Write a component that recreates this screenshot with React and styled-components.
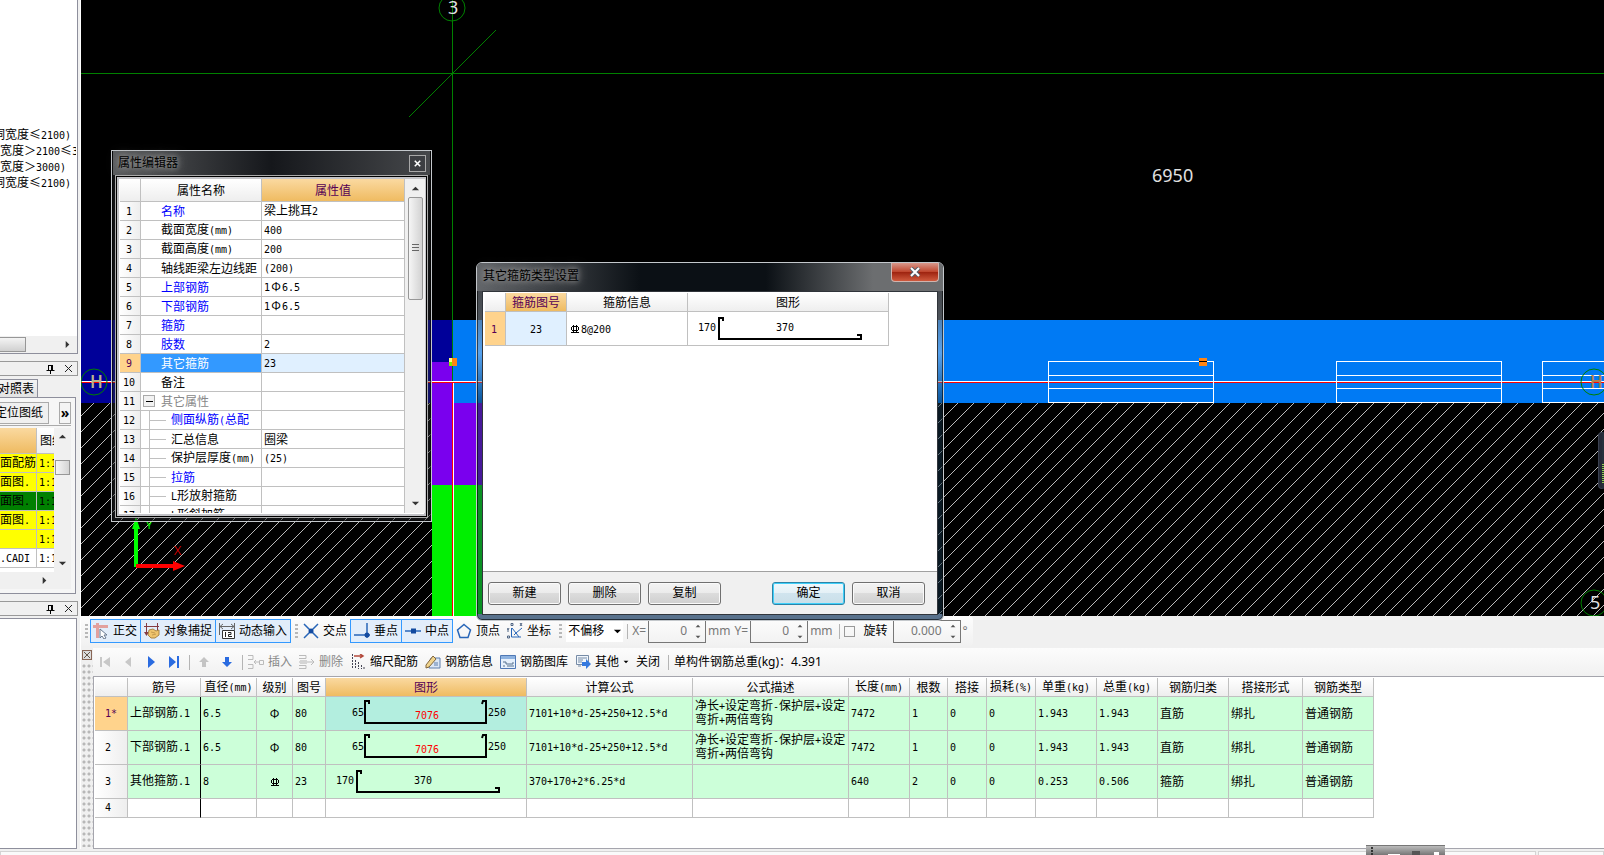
import { Fragment } from "react";
import styled, { createGlobalStyle, css } from "styled-components";

const GlobalStyle = createGlobalStyle`
  * {
    box-sizing: border-box;
  }

  body {
    margin: 0;
    background: #f0f0f0;
    color: #000;
    font-family: "Noto Sans", "Noto Sans CJK SC", sans-serif;
    font-size: 12px;
    line-height: 16px;
    overflow: hidden;
  }

  button,
  input,
  select {
    font: inherit;
    color: inherit;
    margin: 0;
    padding: 0;
  }
`;

const properties = [
  { name: "名称", value: "梁上挑耳2", link: true },
  { name: "截面宽度(mm)", value: "400" },
  { name: "截面高度(mm)", value: "200" },
  { name: "轴线距梁左边线距", value: "(200)" },
  { name: "上部钢筋", value: "1Φ6.5", link: true },
  { name: "下部钢筋", value: "1Φ6.5", link: true },
  { name: "箍筋", value: "", link: true },
  { name: "肢数", value: "2", link: true },
  { name: "其它箍筋", value: "23", selected: true },
  { name: "备注", value: "" },
  { name: "其它属性", value: "", group: true },
  { name: "侧面纵筋(总配", value: "", link: true, child: true },
  { name: "汇总信息", value: "圈梁", child: true },
  { name: "保护层厚度(mm)", value: "(25)", child: true },
  { name: "拉筋", value: "", link: true, child: true },
  { name: "L形放射箍筋", value: "", child: true },
  { name: "L形斜加筋", value: "", child: true },
];

const columns = [
  ["", 33],
  ["筋号", 73],
  ["直径(mm)", 56],
  ["级别", 36],
  ["图号", 33],
  ["图形", 201],
  ["计算公式", 166],
  ["公式描述", 156],
  ["长度(mm)", 61],
  ["根数", 38],
  ["搭接", 39],
  ["损耗(%)", 49],
  ["单重(kg)", 61],
  ["总重(kg)", 61],
  ["钢筋归类", 71],
  ["搭接形式", 74],
  ["钢筋类型", 71],
];

const longNote = "净长+设定弯折-保护层+设定弯折+两倍弯钩";

const bars = [
  ["1*", "上部钢筋.1", "6.5", 1, "80", "u", "7101+10*d-25+250+12.5*d", longNote, "7472", "1", "0", "0", "1.943", "1.943", "直筋", "绑扎", "普通钢筋"],
  ["2", "下部钢筋.1", "6.5", 1, "80", "u", "7101+10*d-25+250+12.5*d", longNote, "7472", "1", "0", "0", "1.943", "1.943", "直筋", "绑扎", "普通钢筋"],
  ["3", "其他箍筋.1", "8", 3, "23", "l", "370+170+2*6.25*d", "", "640", "2", "0", "0", "0.253", "0.506", "箍筋", "绑扎", "普通钢筋"],
];

const drawings = [
  { name: "面配筋", tone: "yellow" },
  { name: "面图.", tone: "yellow" },
  { name: "面图.", tone: "green" },
  { name: "面图.", tone: "yellow" },
  { name: "", tone: "yellow" },
  { name: ".CADI", tone: "white" },
];

// Han characters take 12px each, Latin ones 6px
function Sim({ children }) {
  return String(children)
    .split(/([\x20-\x7e]+)/)
    .map((part, i) =>
      i % 2 ? (
        <Half key={i}>{part}</Half>
      ) : (
        <Fragment key={i}>
          {part.split(/(Φ)/).map((bit, j) => (bit === "Φ" ? <Phi key={j}>Φ</Phi> : bit))}
        </Fragment>
      )
    );
}

function GradeThree() {
  return (
    <Symbol width="12" height="12" viewBox="0 0 12 12" role="img" aria-label="三级钢">
      <path d="M3 3.500h6M2.500 4v3M9.500 4v3M3 7.500h6M4.500 2v8M7.500 2v8M2 9.500h8" />
    </Symbol>
  );
}

function BarShape({ type }) {
  return (
    <Shape width="200" height="33" viewBox="0 0 200 33">
      {type === "u" ? (
        <>
          <path d="M43 7V4h-4v22h121V4h-3l-1 3" />
          <text x="26" y="19">65</text>
          <text x="89" y="22" fill="#f00">7076</text>
          <text x="162" y="19">250</text>
        </>
      ) : (
        <>
          <path d="M35 9V6h-4v21h142v-4h-4" />
          <text x="10" y="19">170</text>
          <text x="88" y="19">370</text>
        </>
      )}
    </Shape>
  );
}

function Triangle({ dir = "down", size = 3, color = "#333" }) {
  const d = {
    down: "M1 3h8l-4 4z",
    up: "M1 7h8l-4-4z",
    right: "M3 1v8l4-4z",
  }[dir];
  return (
    <svg width={size * 3} height={size * 3} viewBox="0 0 10 10" aria-hidden="true">
      <path d={d} fill={color} />
    </svg>
  );
}

function Cross({ size = 9, color = "#222", weight = 1 }) {
  return (
    <svg width={size} height={size} viewBox="0 0 9 9" aria-hidden="true">
      <path d="M1 1l7 7M8 1l-7 7" stroke={color} strokeWidth={weight} fill="none" />
    </svg>
  );
}

function DockTitle() {
  return (
    <DockBar>
      <FlatButton aria-label="固定">
        <svg width="9" height="10" viewBox="0 0 9 10">
          <path d="M2.500 1v5M2 1.500h5M.5 6.500h8M4.500 7v3" stroke="#000" fill="none" />
          <path d="M5 1h2v5H5z" fill="#000" />
        </svg>
      </FlatButton>
      <FlatButton aria-label="关闭">
        <Cross />
      </FlatButton>
    </DockBar>
  );
}

const icons = {
  ortho: (
    <>
      <path d="M0 3.500h15M4.500 0v15" stroke="#e2a09d" strokeWidth="3" />
      <path d="M7 6l7 6h-3l2 3-2 1-2-3-2 2z" fill="#fff" stroke="#68788f" />
    </>
  ),
  snap: (
    <>
      <path d="M0 3.500h15M2.500 0v12M13.500 0v7" stroke="#843b43" />
      <path d="M0 9l2.500 4L5 9z" fill="#843b43" />
      <path d="M5 7l4-1 3 2 3-1v5l-4 3H7l-3-3z" fill="#efc46c" stroke="#a88445" />
      <path d="M7 9l4 1M8 12l4-1" stroke="#c49a50" />
    </>
  ),
  dynamic: (
    <>
      <path d="M.5 0v12M15.500 0v7M1 3.500h14M4 1L1 3.500 4 6M12 1l3 2.500L12 6" stroke="#666" />
      <path d="M3.500 7.500h12v8h-12z" fill="#fff" stroke="#333" />
      <path d="M6.500 9v5M9 9.500h3v2H9.500v2H13" stroke="#222" />
    </>
  ),
  cross: (
    <>
      <path d="M1 1l14 14M15 1L1 15" stroke="#2866b8" strokeWidth="1.500" />
      <circle cx="8" cy="8" r="2.500" fill="#124aa0" />
    </>
  ),
  foot: (
    <>
      <path d="M0 12h16M13 0v15" stroke="#2866b8" strokeWidth="1.500" />
      <circle cx="13" cy="12" r="2.500" fill="#124aa0" />
    </>
  ),
  middle: (
    <>
      <path d="M0 8h16" stroke="#2866b8" strokeWidth="1.500" />
      <path d="M6 5.500h5v5H6z" fill="#124aa0" />
    </>
  ),
  vertex: <path d="M8 1.500l6.500 5.500L12 14.500H4L1.500 7z" stroke="#2866b8" strokeWidth="1.500" />,
  coord: (
    <>
      <path d="M4.500 5v9H14M5 5l4 5 6-5M7 12l2-2 3 4" stroke="#2866b8" />
      <path d="M4 .5h2v2H4zM13 0l2 3M15 0l-2 3M0 5l1 2 1-2M1 7v2M.5 13h2v2h-2z" stroke="#4f6482" />
    </>
  ),
  first: <path d="M3 3h2v10H3zM13 3v10L6 8z" fill="#c8c8c8" />,
  prev: <path d="M11 3v10L5 8z" fill="#c8c8c8" />,
  next: <path d="M5 2v12l7-6z" fill="#2a6be0" />,
  last: <path d="M3 2v12l7-6zM11 2h2v12h-2z" fill="#2a6be0" />,
  up: <path d="M8 3l5 5h-3v5H6V8H3z" fill="#c4c4c4" />,
  down: <path d="M8 13l5-5h-3V3H6v5H3z" fill="#2a6be0" />,
  insert: <path d="M0 1.500h5v4H0M0 10.500h5v4H0M6 8h5M8 6L6 8l2 2M11.500 6.500h4v4h-4z" stroke="#bbb" />,
  remove: (
    <>
      <path d="M0 1.500h7v3H0M0 14.500h7v-3H0M0 8h15M12 5l3 3-3 3" stroke="#bbb" />
      <path d="M1 6h7v4H1z" fill="#d4d4d4" />
    </>
  ),
  scale: (
    <>
      <path d="M2.500 0v15M5.500 6v9M8.500 8v7M11.500 11v4M14 13v2" stroke="#445" strokeDasharray="2 1" />
      <path d="M4 2h9M10 0l3 2-3 2" stroke="#b34a3c" strokeWidth="1.500" />
    </>
  ),
  info: (
    <>
      <path d="M6 4h9v10H4V9z" fill="#dbe7f6" stroke="#5f7fac" />
      <path d="M1 11l7-9 3 3-7 8-3 1z" fill="#f1d58d" stroke="#80653d" />
      <path d="M9 9h4M9 11h4" stroke="#5f7fac" />
    </>
  ),
  library: (
    <>
      <path d="M.5 1.500h15v13H.5z" fill="#e6f0fc" stroke="#4f78b5" />
      <path d="M1 2h14v3H1z" fill="#8db2e0" />
      <path d="M3 8h3v2h7V8M3 12h2M7 12h7" stroke="#55718e" />
    </>
  ),
  other: (
    <>
      <path d="M1.500 1.500h12v9h-12z" fill="#f0f6fc" stroke="#768ba6" />
      <path d="M3 4h9M3 6h5M3 8h4M3 12h3" stroke="#768ba6" />
      <path d="M7 8h4V5l5 5-5 5v-3H7z" fill="#3479df" />
    </>
  ),
};

function Icon({ name }) {
  return (
    <svg width="16" height="16" viewBox="0 0 16 16" fill="none" aria-hidden="true">
      {icons[name]}
    </svg>
  );
}

function Tool({ icon, children, active, disabled }) {
  return (
    <ToolButton $active={active} disabled={disabled}>
      <Icon name={icon} />
      {children}
    </ToolButton>
  );
}

function Spin({ id, value, wide }) {
  return (
    <SpinBox $wide={wide}>
      <SpinInput id={id} defaultValue={value} disabled />
      <SpinArrows>
        <Triangle dir="up" color="#555" size={2} />
        <Triangle color="#555" size={2} />
      </SpinArrows>
    </SpinBox>
  );
}

function Scene() {
  return (
    <SceneSvg>
      <defs>
        <pattern id="hatch" width="16" height="16" patternUnits="userSpaceOnUse">
          <path d="M-1 1L1-1M0 16L16 0M15 17l2-2" stroke="#b8b8b8" strokeWidth="1" />
        </pattern>
      </defs>
      <g shapeRendering="crispEdges">
        <rect y="403" width="100%" height="100%" fill="url(#hatch)" />
        <rect y="320" width="372" height="83" fill="#000099" />
        <rect x="372" y="320" width="100%" height="83" fill="#007af4" />
        <rect x="351" y="362" width="21" height="41" fill="#7a00ee" />
        <rect x="351" y="403" width="90" height="82" fill="#7a00ee" />
        <rect x="351" y="485" width="90" height="100%" fill="#00f000" />
        <path d="M0 73.500h2000M371.500 0v382" stroke="#008000" />
        <path d="M0 381.500h2000M372.500 383v400" stroke="#fff" />
        <path d="M0 382.500h2000M371.500 383v400" stroke="#f00" />
        <path d="M967.500 361.500h165v41h-165zM967.500 375.500h165M967.500 388.500h165" stroke="#fff" fill="none" />
        <path d="M1255.500 361.500h165v41h-165zM1255.500 375.500h165M1255.500 388.500h165" stroke="#fff" fill="none" />
        <path d="M1461.500 361.500h165v41h-165zM1461.500 375.500h165M1461.500 388.500h165" stroke="#fff" fill="none" />
        <rect x="1118" y="358" width="8" height="8" fill="#ff8514" />
        <path d="M1118 361.500h8" stroke="#000" />
        <rect x="368" y="358" width="8" height="8" fill="#ff8514" />
        <path d="M368 358h3v4h-3z" fill="#ffff80" />
        <path d="M368 362h3v4h-3z" fill="#7cf000" />
      </g>
      <path d="M328 117l87-87" stroke="#008000" />
      <g fill="none" stroke="#008000">
        <circle cx="371" cy="8" r="13" />
        <circle cx="13" cy="382" r="13" />
        <circle cx="1513" cy="382" r="13" />
        <circle cx="1513" cy="603" r="13" />
      </g>
      <g fill="#e0e0e0" fontSize="18">
        <text x="367" y="14">3</text>
        <text x="1509" y="609">5</text>
        <text x="1071" y="182">6950</text>
      </g>
      <g fontSize="17" fontWeight="600">
        <text x="9" y="388" fill="#b9b48c">H</text>
        <text x="1509" y="388" fill="#b08050">H</text>
      </g>
      <path d="M55 567v-44" stroke="#0f0" strokeWidth="4" />
      <path d="M51 529l4-12 4 12z" fill="#0f0" />
      <path d="M55 566h38" stroke="#f00" strokeWidth="4" />
      <path d="M92 561l12 5-12 5z" fill="#f00" />
      <text x="65" y="529" fontSize="11" fill="#0f0">Y</text>
      <text x="93" y="555" fontSize="13" fontWeight="300" fill="#f00">X</text>
    </SceneSvg>
  );
}

function PropertyEditor() {
  return (
    <EditorWindow aria-label="属性编辑器">
      <EditorTitle>
        <Glow>属性编辑器</Glow>
        <SmallClose aria-label="关闭">
          <Cross size={7} color="#fff" weight={2} />
        </SmallClose>
      </EditorTitle>
      <EditorBody>
        <GridClip>
          <Grid>
            <colgroup>
              <col width="21" />
              <col width="121" />
              <col width="143" />
            </colgroup>
            <thead>
              <tr>
                <Head $tall />
                <Head $tall>属性名称</Head>
                <Head $tall $hot>属性值</Head>
              </tr>
            </thead>
            <tbody>
              {properties.map((row, i) => (
                <tr key={i}>
                  <RowHead $hot={row.selected}>
                    <Sim>{i + 1}</Sim>
                  </RowHead>
                  <NameCell $selected={row.selected} $link={row.link} $group={row.group}>
                    <NameLine>
                      {row.child && <Branch />}
                      {row.group && <Expander aria-label="折叠" />}
                      {!row.child && !row.group && <Indent />}
                      <span>
                        <Sim>{row.name}</Sim>
                      </span>
                    </NameLine>
                  </NameCell>
                  <Cell $tint={row.selected}>
                    <Sim>{row.value}</Sim>
                  </Cell>
                </tr>
              ))}
            </tbody>
          </Grid>
          <EditorScroll>
            <Triangle dir="up" />
            <ScrollThumb />
            <Triangle />
          </EditorScroll>
        </GridClip>
      </EditorBody>
    </EditorWindow>
  );
}

function StirrupDialog() {
  return (
    <DialogWindow role="dialog" aria-label="其它箍筋类型设置">
      <DialogTitle>
        <Glow>其它箍筋类型设置</Glow>
        <RedClose aria-label="关闭">
          <svg width="12" height="10" viewBox="0 0 12 10">
            <path d="M2 1l8 8M10 1L2 9" stroke="#54606c" strokeWidth="4" />
            <path d="M2 1l8 8M10 1L2 9" stroke="#fff" strokeWidth="2" />
          </svg>
        </RedClose>
      </DialogTitle>
      <DialogBody>
        <DialogList>
          <Grid>
            <colgroup>
              <col width="21" />
              <col width="61" />
              <col width="121" />
              <col width="201" />
            </colgroup>
            <thead>
              <tr>
                <Head />
                <Head $hot>箍筋图号</Head>
                <Head>箍筋信息</Head>
                <Head>图形</Head>
              </tr>
            </thead>
            <tbody>
              <tr>
                <RowHead $hot $tall>
                  <Sim>1</Sim>
                </RowHead>
                <Cell $tint $center>
                  <Sim>23</Sim>
                </Cell>
                <Cell>
                  <GradeThree />
                  <Sim>8@200</Sim>
                </Cell>
                <ShapeCell>
                  <BarShape type="l" />
                </ShapeCell>
              </tr>
            </tbody>
          </Grid>
        </DialogList>
        <DialogFooter>
          <PushButton>新建</PushButton>
          <PushButton>删除</PushButton>
          <PushButton>复制</PushButton>
          <Spacer />
          <PushButton $primary>确定</PushButton>
          <PushButton>取消</PushButton>
        </DialogFooter>
      </DialogBody>
    </DialogWindow>
  );
}

function Sidebar() {
  return (
    <Side>
      <TreePanel>
        <TreeList>
          <TreeRow $cut>
            <Sim>洞宽度≤2100)</Sim>
          </TreeRow>
          <TreeRow>
            <Sim>宽度＞2100≤3</Sim>
          </TreeRow>
          <TreeRow>
            <Sim>宽度＞3000)</Sim>
          </TreeRow>
          <TreeRow $cut>
            <Sim>洞宽度≤2100)</Sim>
          </TreeRow>
        </TreeList>
        <TreeScroll>
          <HorizontalThumb />
          <Triangle dir="right" />
        </TreeScroll>
      </TreePanel>
      <DockTitle />
      <TabButton>对照表</TabButton>
      <DrawingPanel>
        <DrawingTools>
          <PlaceButton>定位图纸</PlaceButton>
          <MoreButton aria-label="更多">»</MoreButton>
        </DrawingTools>
        <DrawingBody>
          <DrawingTable>
            <colgroup>
              <col width="37" />
              <col />
            </colgroup>
            <thead>
              <tr>
                <DrawingHead $hot />
                <DrawingHead>图纸</DrawingHead>
              </tr>
            </thead>
            <tbody>
              {drawings.map((row, i) => (
                <tr key={i}>
                  <DrawingCell $tone={row.tone} $end>
                    <Sim>{row.name}</Sim>
                  </DrawingCell>
                  <DrawingCell $tone={row.tone}>
                    <Sim>1:1</Sim>
                  </DrawingCell>
                </tr>
              ))}
            </tbody>
          </DrawingTable>
          <DrawingScroll>
            <Triangle dir="up" />
            <DrawingThumb />
            <Spacer />
            <Triangle />
          </DrawingScroll>
        </DrawingBody>
        <DrawingBottom>
          <Triangle dir="right" />
        </DrawingBottom>
      </DrawingPanel>
      <DockTitle />
      <EmptyPanel />
    </Side>
  );
}

function SnapToolbar() {
  return (
    <SnapBar>
      <SnapGroup>
        <Handle />
        <Tool icon="ortho" active>正交</Tool>
        <Tool icon="snap" active>对象捕捉</Tool>
        <Tool icon="dynamic" active>动态输入</Tool>
        <Handle />
        <Tool icon="cross">交点</Tool>
        <Tool icon="foot" active>垂点</Tool>
        <Tool icon="middle" active>中点</Tool>
        <Tool icon="vertex">顶点</Tool>
        <Tool icon="coord">坐标</Tool>
        <Handle />
        <OffsetBox>
          <OffsetSelect aria-label="偏移方式">
            <option>不偏移</option>
          </OffsetSelect>
          <Triangle color="#000" />
        </OffsetBox>
        <Divider />
        <Unit as="label" htmlFor="offset-x">X=</Unit>
        <Spin id="offset-x" value="0" />
        <Unit>mm</Unit>
        <Unit as="label" htmlFor="offset-y">Y=</Unit>
        <Spin id="offset-y" value="0" />
        <Unit>mm</Unit>
        <Divider />
        <RotateCheck id="rotate" type="checkbox" disabled />
        <RotateLabel htmlFor="rotate">旋转</RotateLabel>
        <Spin id="angle" value="0.000" wide />
        <Unit as="label" htmlFor="angle">°</Unit>
      </SnapGroup>
    </SnapBar>
  );
}

function BarDetail() {
  return (
    <Detail>
      <GripColumn>
        <TinyClose aria-label="关闭">
          <Cross size={8} color="#543" />
        </TinyClose>
        <Grip />
      </GripColumn>
      <DetailMain>
        <DetailTools>
          {["first", "prev", "next", "last"].map((name) => (
            <NavButton key={name} aria-label={name}>
              <Icon name={name} />
            </NavButton>
          ))}
          <Divider />
          <NavButton aria-label="up">
            <Icon name="up" />
          </NavButton>
          <NavButton aria-label="down">
            <Icon name="down" />
          </NavButton>
          <Divider />
          <Tool icon="insert" disabled>插入</Tool>
          <Tool icon="remove" disabled>删除</Tool>
          <Tool icon="scale">缩尺配筋</Tool>
          <Tool icon="info">钢筋信息</Tool>
          <Tool icon="library">钢筋图库</Tool>
          <Tool icon="other">
            其他
            <Triangle color="#000" size={2} />
          </Tool>
          <ToolButton>关闭</ToolButton>
          <Divider />
          <Total>单构件钢筋总重(kg)：4.391</Total>
        </DetailTools>
        <DetailBody>
          <Grid>
            <colgroup>
              {columns.map(([name, width]) => (
                <col key={name} width={width} />
              ))}
            </colgroup>
            <thead>
              <tr>
                {columns.map(([name]) => (
                  <Head key={name} $hot={name === "图形"}>
                    <Sim>{name}</Sim>
                  </Head>
                ))}
              </tr>
            </thead>
            <tbody>
              {bars.map((row, i) => (
                <tr key={i}>
                  {row.map((value, j) => {
                    if (j === 0) {
                      return (
                        <RowHead key={j} $hot={i === 0} $tall $left>
                          <Sim>{value}</Sim>
                        </RowHead>
                      );
                    }
                    if (j === 5) {
                      return (
                        <ShapeCell key={j} $green $current={i === 0}>
                          <BarShape type={value} />
                        </ShapeCell>
                      );
                    }
                    if (j === 3) {
                      return (
                        <Cell key={j} $green $center>
                          {value === 3 ? <GradeThree /> : <Phi>Φ</Phi>}
                        </Cell>
                      );
                    }
                    return (
                      <Cell key={j} $green $frozen={j === 1} $wrap={j === 7}>
                        <Sim>{value}</Sim>
                      </Cell>
                    );
                  })}
                </tr>
              ))}
              <tr>
                <RowHead $left>
                  <Sim>4</Sim>
                </RowHead>
                {columns.slice(1).map(([name], j) => (
                  <Cell key={name} $frozen={j === 0} />
                ))}
              </tr>
            </tbody>
          </Grid>
        </DetailBody>
      </DetailMain>
    </Detail>
  );
}

export default function App() {
  return (
    <Shell>
      <GlobalStyle />
      <Workspace>
        <Sidebar />
        <Main>
          <Canvas>
            <Scene />
            <PropertyEditor />
            <StirrupDialog />
            <Meter />
          </Canvas>
          <SnapToolbar />
          <BarDetail />
        </Main>
      </Workspace>
      <StatusBar>
        <StatusPart />
        <StatusPart $last />
        <FloatingBar />
      </StatusBar>
    </Shell>
  );
}

const Shell = styled.div`
  display: flex;
  flex-direction: column;
  min-height: 100vh;
`;

const Workspace = styled.div`
  display: flex;
  flex: 1;
`;

const Main = styled.main`
  display: flex;
  flex-direction: column;
  flex: 1;
  min-width: 0;
`;

const Spacer = styled.span`
  flex: 1;
`;

const Half = styled.span`
  font-family: "DejaVu Sans Mono", monospace;
  font-size: 10px;
`;

const Phi = styled.span`
  display: inline-block;
  width: 12px;
  text-align: center;
`;

const Symbol = styled.svg`
  fill: none;
  stroke: #000;
  vertical-align: middle;
`;

const Shape = styled.svg`
  display: block;
  font-family: "DejaVu Sans Mono", monospace;
  font-size: 10px;

  path {
    fill: none;
    stroke: #000;
    stroke-width: 2px;
  }
`;

/* sidebar */

const Side = styled.aside`
  display: flex;
  flex-direction: column;
  width: 81px;
  padding-right: 2px;
  border-right: 1px solid #fff;
  overflow: hidden;
`;

const TreePanel = styled.section`
  display: flex;
  flex-direction: column;
  flex: 1;
  background: #fff;
  border-right: 1px solid #8e8f9c;
  border-bottom: 1px solid #8e8f9c;
`;

const TreeList = styled.div`
  flex: 1;
  padding-top: 126px;
  margin-right: 1px;
  overflow: hidden;
  font-family: "Noto Sans CJK SC", sans-serif;
`;

const TreeRow = styled.div`
  height: 16px;
  white-space: nowrap;
  text-indent: ${({ $cut }) => ($cut ? "-7px" : "0")};
`;

const TreeScroll = styled.div`
  display: flex;
  align-items: center;
  justify-content: space-between;
  height: 17px;
  padding-right: 5px;
  background: #f0f0f0;
`;

const HorizontalThumb = styled.span`
  width: 26px;
  height: 15px;
  border: 1px solid #979797;
  border-left: 0;
  background: linear-gradient(#f4f4f4, #d0d0d0);
`;

const DockBar = styled.div`
  display: flex;
  align-items: center;
  justify-content: flex-end;
  gap: 9px;
  height: 15px;
  margin-top: 7px;
  padding-right: 4px;
  border: 1px solid #999;
  border-left: 0;
`;

const FlatButton = styled.button`
  display: flex;
  border: 0;
  background: none;
`;

const TabButton = styled.button`
  align-self: flex-start;
  height: 18px;
  margin-top: 3px;
  padding: 0 3px 0 0;
  border: 1px solid #8e8f9c;
  border-width: 1px 1px 0 0;
  background: linear-gradient(#f4f4f4, #e2e2e2);
  text-indent: -2px;
`;

const DrawingPanel = styled.section`
  height: 197px;
  margin-right: 2px;
  padding: 4px 4px 0 0;
  border: 1px solid #8e8f9c;
  border-left: 0;
  background: #f6f6f6;
`;

const DrawingTools = styled.div`
  display: flex;
  justify-content: space-between;
  height: 24px;
  border-bottom: 1px solid #aaa;
`;

const PlaceButton = styled.button`
  width: 49px;
  height: 22px;
  padding: 0 5px 0 0;
  border: 1px solid #aaa;
  border-left: 0;
  background: #f0f0f0;
  white-space: nowrap;
  text-align: right;
  text-indent: -5px;
  overflow: hidden;
`;

const MoreButton = styled.button`
  width: 12px;
  height: 22px;
  border: 1px solid #aaa;
  background: #f4f4f4;
  font-size: 14px;
  font-weight: 700;
  line-height: 12px;
`;

const DrawingBody = styled.div`
  display: flex;
  height: 144px;
  margin-top: 2px;
  background: #fff;
`;

const DrawingTable = styled.table`
  flex: none;
  align-self: flex-start;
  width: 54px;
  border-collapse: separate;
  border-spacing: 0;
  table-layout: fixed;
`;

const drawingLines = css`
  border: 1px solid #c0c0c0;
  border-width: 0 1px 1px 0;
  white-space: nowrap;
  overflow: hidden;

  &:last-child {
    border-right: 0;
  }
`;

const DrawingHead = styled.th`
  ${drawingLines}
  height: 26px;
  padding: 0 0 0 3px;
  background: ${({ $hot }) =>
    $hot ? "linear-gradient(#fad9a0, #efbb61)" : "linear-gradient(#fff, #eee)"};
  font-weight: 400;
  text-align: left;
`;

const DrawingCell = styled.td`
  ${drawingLines}
  height: 19px;
  padding: 0 ${({ $end }) => ($end ? "7px 0 0" : "0 0 2px")};
  background: ${({ $tone }) => ({ yellow: "#ff0", green: "#008000", white: "#fff" })[$tone]};
  text-align: ${({ $end }) => ($end ? "right" : "left")};
`;

const DrawingScroll = styled.div`
  display: flex;
  flex-direction: column;
  align-items: center;
  width: 17px;
  padding: 4px 0;
  background: #f0f0f0;
`;

const DrawingThumb = styled.span`
  width: 15px;
  height: 15px;
  margin-top: 19px;
  border: 1px solid #979797;
  background: linear-gradient(to right, #f6f6f6, #d4d4d4);
`;

const DrawingBottom = styled.div`
  display: flex;
  align-items: center;
  justify-content: flex-end;
  height: 17px;
  padding-right: 22px;
  background: #f0f0f0;
`;

const EmptyPanel = styled.section`
  height: 231px;
  margin-top: 2px;
  margin-right: 1px;
  background: #fff;
  border: 1px solid #8e8f9c;
  border-left: 0;
`;

/* drawing area and its windows */

const Canvas = styled.section`
  position: relative;
  z-index: 1;
  flex: 1;
  min-height: 560px;
  background: #000;
`;

const SceneSvg = styled.svg`
  position: absolute;
  width: 100%;
  height: 100%;
`;

const Meter = styled.div`
  position: absolute;
  top: 432px;
  right: 0;
  width: 6px;
  height: 57px;
  border: 1px solid #3a4050;
  border-right: 2px solid #26303c;
  border-radius: 4px 0 0 4px;
  background: #252a38;

  &::after {
    content: "";
    position: absolute;
    right: -2px;
    top: 31px;
    width: 2px;
    height: 20px;
    background: repeating-linear-gradient(#8fd050 0 1px, #252a38 1px 2px);
  }
`;

const windowFrame = css`
  position: absolute;
  display: flex;
  flex-direction: column;
  border: 1px solid #c4c8cc;
  box-shadow: inset 0 0 0 1px rgba(0, 0, 0, 0.6);
`;

const EditorWindow = styled.section`
  ${windowFrame}
  left: 30px;
  top: 150px;
  width: 321px;
  height: 372px;
  padding: 0 3px 3px;
  background: rgba(40, 42, 46, 0.45);
`;

const titleBar = css`
  display: flex;
  justify-content: space-between;
  color: #000;
  background: linear-gradient(to right, #5a5c5e, #15171b 50%, #46484b);
`;

const EditorTitle = styled.header`
  ${titleBar}
  align-items: center;
  height: 24px;
  margin: 0 -2px;
  padding: 0 4px;
`;

const Glow = styled.span`
  padding: 0 1px;
  text-shadow: 0 0 5px #999, 0 0 8px #888, 0 0 12px #888;
`;

const SmallClose = styled.button`
  display: grid;
  place-items: center;
  width: 17px;
  height: 17px;
  border: 1px solid #a8a8a8;
  background: #3c3e42;
`;

const EditorBody = styled.div`
  display: flex;
  flex: 1;
  min-height: 0;
  border: 1px solid #aaa;
  outline: 1px solid #000;
  outline-offset: -2px;
  padding: 3px 2px 4px 4px;
  background: #fff;
  box-shadow: inset 0 0 0 3px #c3c3c7;
`;

const GridClip = styled.div`
  display: flex;
  flex: 1;
  min-height: 0;
  overflow: hidden;
`;

const DialogWindow = styled.section`
  ${windowFrame}
  left: 395px;
  top: 262px;
  width: 468px;
  height: 359px;
  padding: 0 5px 5px;
  border-radius: 6px;
  background: linear-gradient(to top, #58718c 6px, transparent 6px),
    linear-gradient(rgba(70, 72, 76, 0.9), rgba(190, 210, 230, 0.45) 90px, rgba(20, 50, 70, 0.5) 140px);
`;

const DialogTitle = styled.header`
  ${titleBar}
  height: 28px;
  margin: 0 -5px;
  padding: 0 4px 0 5px;
  border-radius: 5px 5px 0 0;
  line-height: 26px;
  background: linear-gradient(to right, #63666a, #0b1015 35%, #0b1015 62%, #6c6e70 85%);
`;

const RedClose = styled.button`
  display: grid;
  place-items: center;
  width: 48px;
  height: 19px;
  border: 1px solid #d0b4ae;
  border-top: 0;
  border-radius: 0 0 4px 4px;
  background: linear-gradient(#d8978a, #c0472f 48%, #9f2410 52%, #cf5a3e);
`;

const DialogBody = styled.div`
  display: flex;
  flex-direction: column;
  flex: 1;
  border: 1px solid #30343a;
  background: #f0f0f0;
`;

const DialogList = styled.div`
  flex: 1;
  padding: 1px 0 0 2px;
  border-bottom: 1px solid #a0a0a0;
  background: #fff;
`;

const DialogFooter = styled.footer`
  display: flex;
  align-items: center;
  gap: 7px;
  height: 42px;
  padding: 0 12px 0 5px;
`;

const PushButton = styled.button`
  width: 73px;
  height: 23px;
  border: 1px solid #707070;
  border-radius: 3px;
  background: linear-gradient(#f3f3f3, #ebebeb 50%, #dcdcdc 50%, #cfcfcf);
  box-shadow: inset 0 0 0 1px #fafafa;

  ${({ $primary }) =>
    $primary &&
    css`
      border-color: #2c84a8;
      background: linear-gradient(#f0f8fc, #e4f0f6 50%, #d0e4ee 50%, #cadfe8);
      box-shadow: inset 0 0 0 1px #3fd0fa;
    `}
`;

/* grids */

const Grid = styled.table`
  flex: none;
  align-self: flex-start;
  width: 0;
  border-collapse: separate;
  border-spacing: 0;
  table-layout: fixed;
  font-family: "Noto Sans CJK SC", sans-serif;
  line-height: 14px;
`;

const gridLines = css`
  border: 1px solid #c0c0c0;
  border-width: 0 1px 1px 0;
  overflow: hidden;
`;

const Head = styled.th`
  ${gridLines}
  height: ${({ $tall }) => ($tall ? "23px" : "19px")};
  padding: 0;
  background: ${({ $hot }) =>
    $hot ? "linear-gradient(#fad9a0, #efbb61)" : "linear-gradient(#fff, #eee)"};
  color: ${({ $hot }) => ($hot ? "#550055" : "#000")};
  font-weight: 400;
  white-space: nowrap;
`;

const RowHead = styled.th`
  ${gridLines}
  height: ${({ $tall }) => ($tall ? "34px" : "19px")};
  padding: ${({ $left }) => ($left ? "0 0 2px 10px" : "0 2px 0 0")};
  background: ${({ $hot }) => ($hot ? "#ffd38c" : "linear-gradient(to right, #fff, #eee)")};
  color: ${({ $hot }) => ($hot ? "#550055" : "#000")};
  font-weight: 400;
  text-align: ${({ $left }) => ($left ? "left" : "center")};
`;

const Cell = styled.td`
  ${gridLines}
  padding: 0 0 ${({ $green }) => ($green ? "2px" : "0")} ${({ $center }) => ($center ? "0" : "2px")};
  border-right-color: ${({ $frozen }) => ($frozen ? "#000" : "#c0c0c0")};
  background: ${({ $tint, $green }) => ($tint ? "#e0f0ff" : $green ? "#ccffd9" : "#fff")};
  text-align: ${({ $center }) => ($center ? "center" : "left")};
  white-space: ${({ $wrap }) => ($wrap ? "normal" : "nowrap")};
  word-break: break-all;
  line-height: ${({ $wrap }) => ($wrap ? "12px" : "14px")};
`;

const ShapeCell = styled.td`
  ${gridLines}
  padding: 0;
  background: ${({ $green, $current }) => ($current ? "#b3eedf" : $green ? "#ccffd9" : "#fff")};
`;

const NameCell = styled.td`
  ${gridLines}
  padding: 0;
  background: ${({ $selected }) => ($selected ? "#3399ff" : "#fff")};
  color: ${({ $selected, $link, $group }) =>
    $selected ? "#fff" : $link ? "#00f" : $group ? "#888" : "#000"};
  white-space: nowrap;
`;

const NameLine = styled.div`
  display: flex;
  align-items: center;
  height: 18px;
`;

const Indent = styled.span`
  width: 20px;
`;

const Branch = styled.span`
  width: 22px;
  height: 19px;
  margin-left: 8px;
  border-left: 1px solid #c0c0c0;
  background: linear-gradient(#c0c0c0, #c0c0c0) 0 9px / 16px 1px no-repeat;
`;

const Expander = styled.button`
  width: 12px;
  height: 12px;
  margin: 0 6px 0 2px;
  border: 1px solid #aaa;
  background: linear-gradient(#000, #000) center / 7px 1px no-repeat, #f2f2f2;
`;

const EditorScroll = styled.div`
  display: flex;
  flex-direction: column;
  align-items: center;
  flex: 1;
  padding: 5px 0;
  background: #f0f0f0;

  svg:last-child {
    margin-top: auto;
  }
`;

const ScrollThumb = styled.span`
  width: 15px;
  height: 103px;
  margin-top: 4px;
  border: 1px solid #979797;
  border-radius: 2px;
  background: repeating-linear-gradient(#666 0 1px, transparent 1px 3px) center / 7px 9px no-repeat,
    linear-gradient(to right, #f5f5f5, #d2d2d2);
`;

/* toolbars */

const SnapBar = styled.div`
  height: 32px;
  background: #f0f0f0;
`;

const SnapGroup = styled.div`
  display: flex;
  align-items: center;
  width: max-content;
  height: 30px;
  padding-right: 3px;
  border-radius: 0 4px 4px 0;
  background: linear-gradient(#fdfdfd, #f1f1f1);
`;

const Handle = styled.span`
  width: 3px;
  height: 15px;
  margin: 0 2px 0 4px;
  background: repeating-linear-gradient(#b8b8b8 0 2px, transparent 2px 4px);
`;

const ToolButton = styled.button`
  display: flex;
  align-items: center;
  gap: 4px;
  height: 24px;
  padding: 0 3px 0 2px;
  border: 1px solid ${({ $active }) => ($active ? "#3399ff" : "transparent")};
  background: ${({ $active }) => ($active ? "#e2edfa" : "none")};
  white-space: nowrap;

  & + & {
    margin-left: -1px;
    padding-left: 3px;
  }

  &:disabled {
    color: #888;
  }
`;

const OffsetBox = styled.span`
  display: flex;
  align-items: center;
  width: 57px;
  height: 22px;
  margin-left: 2px;
  padding: 0 1px 0 2px;
  background: #fff;
`;

const OffsetSelect = styled.select`
  flex: 1;
  min-width: 0;
  border: 0;
  background: none;
  appearance: none;
`;

const Divider = styled.span`
  width: 1px;
  height: 15px;
  margin: 0 2px 0 4px;
  background: #b4b4b4;
`;

const Unit = styled.span`
  padding: 0 2px;
  color: #777;
`;

const SpinBox = styled.span`
  display: flex;
  align-items: center;
  width: ${({ $wide }) => ($wide ? "68px" : "58px")};
  height: 23px;
  border: 1px solid #777;
`;

const SpinInput = styled.input`
  flex: 1;
  min-width: 0;
  border: 0;
  background: none;
  color: #777;
  text-align: right;
`;

const SpinArrows = styled.span`
  display: flex;
  flex-direction: column;
  justify-content: space-between;
  height: 17px;
  padding: 0 4px 0 8px;
`;

const RotateCheck = styled.input`
  appearance: none;
  width: 11px;
  height: 11px;
  margin-left: 2px;
  border: 1px solid #999;
`;

const RotateLabel = styled.label`
  padding: 0 5px 0 9px;
`;

const Detail = styled.section`
  display: flex;
  height: 201px;
`;

const GripColumn = styled.div`
  display: flex;
  flex-direction: column;
  width: 12px;
  padding: 2px 1px;
`;

const TinyClose = styled.button`
  display: grid;
  place-items: center;
  width: 10px;
  height: 10px;
  border: 1px solid #865;
  background: #ddd;
`;

const Grip = styled.span`
  flex: 1;
  width: 11px;
  margin-top: 4px;
  background: radial-gradient(circle at 2px 2px, #b8b8b8 1px, transparent 2px) 0 0 / 5px 6px;
`;

const DetailMain = styled.div`
  display: flex;
  flex-direction: column;
  flex: 1;
  min-width: 0;
`;

const DetailTools = styled.div`
  display: flex;
  align-items: center;
  height: 28px;
  background: linear-gradient(#fcfcfc, #f1f1f1);
`;

const NavButton = styled.button`
  display: grid;
  place-items: center;
  width: 23px;
  height: 22px;
  border: 0;
  background: none;
`;

const Total = styled.span`
  padding-left: 3px;
`;

const DetailBody = styled.div`
  flex: 1;
  padding: 1px 0 0 1px;
  border: 1px solid #a5a5ad;
  border-right: 0;
  background: #fff;
  overflow: hidden;
`;

const StatusBar = styled.footer`
  position: relative;
  display: flex;
  gap: 2px;
  height: 6px;
  padding-top: 2px;
`;

const StatusPart = styled.span`
  flex: ${({ $last }) => ($last ? "0 0 66px" : "1")};
  border: 1px solid #d4d4d4;
  border-bottom: 0;
  background: #fafafa;
`;

const FloatingBar = styled.span`
  position: absolute;
  right: 159px;
  bottom: 0;
  width: 79px;
  height: 10px;
  border-top: 1px solid #777;
  background: linear-gradient(#fff, #fff) 22px 8px / 12px 2px no-repeat,
    linear-gradient(#fff, #fff) 68px 6px / 5px 4px no-repeat,
    linear-gradient(#555, #555) 46px 5px / 8px 4px no-repeat,
    radial-gradient(circle at 2px 2px, #333 1px, transparent 1px) 4px 3px / 3px 3px repeat-y,
    linear-gradient(#bbb, #777);
`;
